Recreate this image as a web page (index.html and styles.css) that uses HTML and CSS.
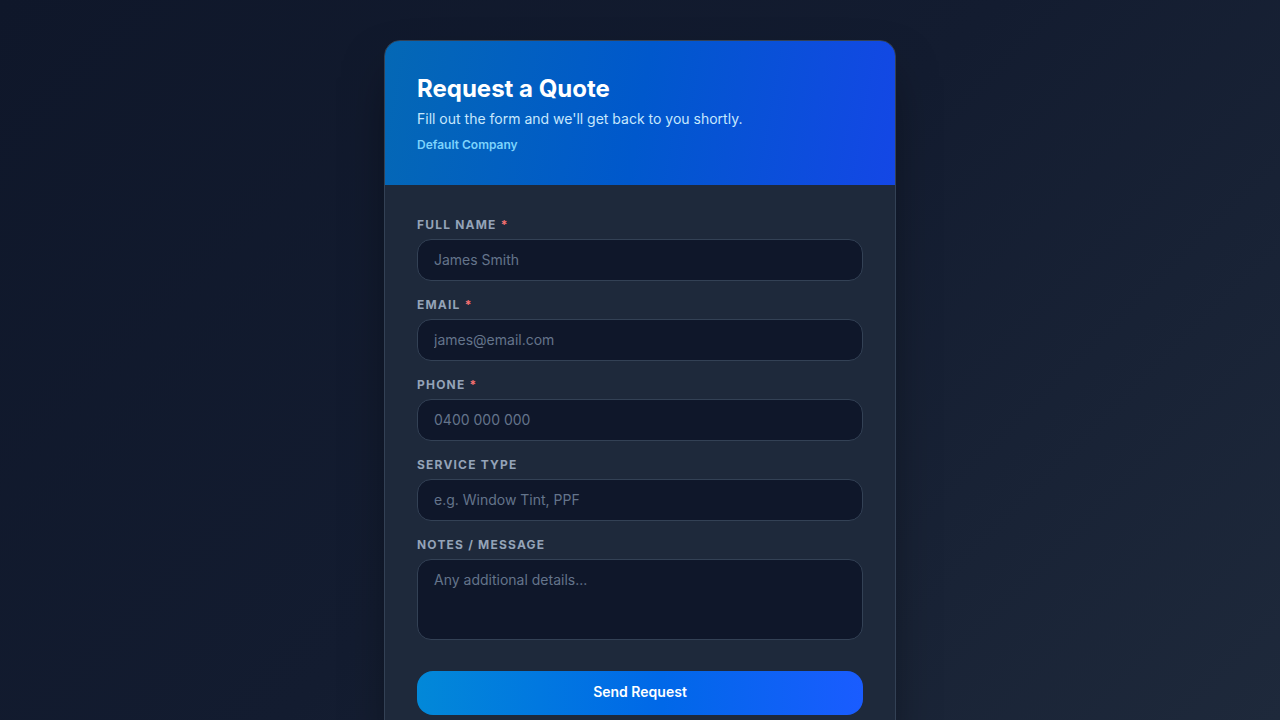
FILE: index.html
```html
<!DOCTYPE html>
<html lang="en">
<head>
<meta charset="utf-8">
<title>Request a Quote</title>
<link rel="stylesheet" href="styles.css">
</head>
<body>
<main class="page">
  <section class="card">
    <header class="card-header">
      <h1 class="title">Request a Quote</h1>
      <p class="subtitle">Fill out the form and we'll get back to you shortly.</p>
      <p class="company">Default Company</p>
    </header>
    <form class="card-body">
      <div class="field">
        <label class="label">Full Name <span class="req">*</span></label>
        <input class="input" type="text" placeholder="James Smith">
      </div>
      <div class="field">
        <label class="label">Email <span class="req">*</span></label>
        <input class="input" type="email" placeholder="james@email.com">
      </div>
      <div class="field">
        <label class="label">Phone <span class="req">*</span></label>
        <input class="input" type="tel" placeholder="0400 000 000">
      </div>
      <div class="field">
        <label class="label">Service Type</label>
        <input class="input" type="text" placeholder="e.g. Window Tint, PPF">
      </div>
      <div class="field">
        <label class="label">Notes / Message</label>
        <textarea class="input textarea" placeholder="Any additional details..."></textarea>
      </div>
      <button class="submit" type="button">Send Request</button>
    </form>
  </section>
</main>
</body>
</html>
```
FILE: styles.css
```css
* { box-sizing: border-box; }
html, body { margin: 0; height: 100%; }
body {
  font-family: Inter, "Noto Sans", sans-serif;
  background: linear-gradient(135deg, #0f172a 0%, #131c30 50%, #1e293b 100%);
  min-height: 100vh;
  overflow: hidden;
}
.page {
  display: flex;
  justify-content: center;
  padding-top: 40px;
}
.card {
  width: 512px;
  background: #1e293b;
  border: 1px solid #334155;
  border-radius: 16px;
  overflow: hidden;
  box-shadow: 0 25px 50px -12px rgba(0, 0, 0, 0.5);
}
.card-header {
  background: linear-gradient(100deg, #0468b5 0%, #0058cc 50%, #1447e6 100%);
  padding: 32px 32px 0;
  height: 144px;
}
.title {
  margin: 0;
  color: #ffffff;
  font-size: 24px;
  font-weight: 700;
  line-height: 32px;
}
.subtitle {
  margin: 4px 0 0;
  color: #c7e8fd;
  font-size: 14px;
  line-height: 20px;
}
.company {
  margin: 8px 0 0;
  color: #7dd3fc;
  font-size: 12px;
  font-weight: 600;
  line-height: 16px;
}
.card-body {
  padding: 32px 32px 24px;
  display: flex;
  flex-direction: column;
  gap: 16px;
}
.field {
  display: flex;
  flex-direction: column;
  gap: 6px;
}
.label {
  color: #94a3b8;
  font-size: 12px;
  font-weight: 700;
  letter-spacing: 1.2px;
  text-transform: uppercase;
  line-height: 16px;
}
.req { color: #f87171; }
.input {
  height: 42px;
  width: 100%;
  background: #0f172a;
  border: 1px solid #334155;
  border-radius: 14px;
  padding: 0 16px 2px;
  color: #e2e8f0;
  font-family: Inter, "Noto Sans", sans-serif;
  font-size: 14px;
  outline: none;
}
.input::placeholder { color: #64748b; }
.textarea {
  height: 81px;
  padding: 10px 16px;
  resize: none;
  line-height: 20px;
  display: block;
}
.submit {
  margin-top: 15px;
  height: 44px;
  border: none;
  border-radius: 16px;
  background: linear-gradient(90deg, #0288d8 0%, #0068e8 55%, #1a5cff 100%);
  color: #ffffff;
  font-family: Inter, "Noto Sans", sans-serif;
  font-size: 14px;
  font-weight: 600;
  padding: 0 0 3px;
  cursor: pointer;
}
```
